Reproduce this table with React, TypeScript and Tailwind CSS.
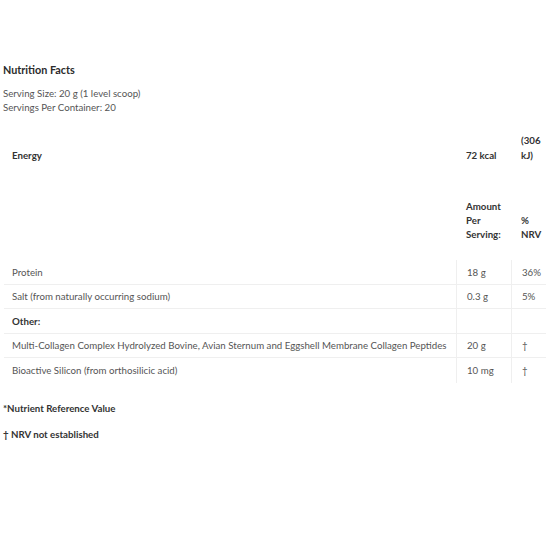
const rows = [
  { name: "Protein", amount: "18 g", nrv: "36%" },
  { name: "Salt (from naturally occurring sodium)", amount: "0.3 g", nrv: "5%" },
  { name: "Other:", amount: "", nrv: "", bold: true },
  {
    name: "Multi-Collagen Complex Hydrolyzed Bovine, Avian Sternum and Eggshell Membrane Collagen Peptides",
    amount: "20 g",
    nrv: "†",
  },
  { name: "Bioactive Silicon (from orthosilicic acid)", amount: "10 mg", nrv: "†" },
];

export default function App() {
  return (
    <div
      className="w-[550px] h-[550px] bg-white text-[9.7px] text-[#555] overflow-hidden"
      style={{ fontFamily: "Lato, 'Open Sans', sans-serif" }}
    >
      <div className="pt-[63px] px-[3px]">
        <h2 className="text-[10.8px] font-bold text-[#2b2b2b] leading-[14px]">Nutrition Facts</h2>
        <div className="mt-[9px] leading-[14px]">
          <p>Serving Size: 20 g (1 level scoop)</p>
          <p>Servings Per Container: 20</p>
        </div>
      </div>

      <div className="mt-[19px] px-[4px]">
        {/* header rows */}
        <div className="grid grid-cols-[452px_55px_39px] items-end font-bold text-[#333] leading-[14.5px]">
          <div className="pl-2">Energy</div>
          <div className="pl-[10px]">72 kcal</div>
          <div className="pl-[10px]">
            <p>(306</p>
            <p>kJ)</p>
          </div>
        </div>
        <div className="mt-[37px] grid grid-cols-[452px_55px_39px] items-end font-bold text-[#333] leading-[14px]">
          <div />
          <div className="pl-[10px]">
            <p>Amount</p>
            <p>Per</p>
            <p>Serving:</p>
          </div>
          <div className="pl-[10px]">
            <p>%</p>
            <p>NRV</p>
          </div>
        </div>

        {/* body */}
        <div className="mt-[19px]">
          {rows.map((r, i) => (
            <div
              key={i}
              className={`grid grid-cols-[452px_55px_39px] h-[24.6px] items-center ${
                i < rows.length - 1 ? "border-b border-[#efefef]" : ""
              }`}
            >
              <div className={`pl-2 whitespace-nowrap ${r.bold ? "font-bold text-[#333]" : ""}`}>{r.name}</div>
              <div className="pl-[10px] h-full flex items-center border-l border-[#efefef]">{r.amount}</div>
              <div className="pl-[10px] h-full flex items-center border-l border-[#efefef]">{r.nrv}</div>
            </div>
          ))}
        </div>
      </div>

      <div className="px-[3px] mt-[18px] font-bold text-[#333] leading-[14px]">
        <p>*Nutrient Reference Value</p>
        <p className="mt-[12px]">† NRV not established</p>
      </div>
    </div>
  );
}
